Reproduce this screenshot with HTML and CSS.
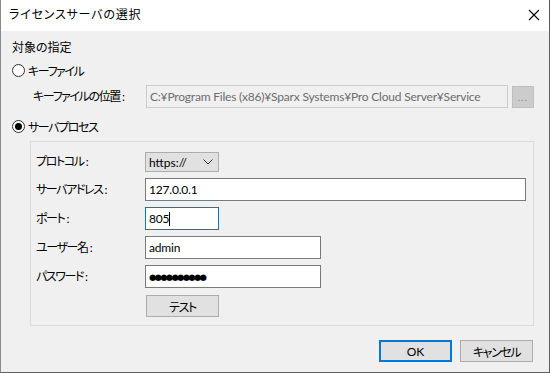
FILE: index.html
```html
<!DOCTYPE html>
<html lang="ja">
<head>
  <meta charset="UTF-8">
  <title>ライセンスサーバの選択</title>
  <link rel="stylesheet" href="styles.css">
</head>
<body>
  <div class="window">
    <div class="titlebar">
      <span class="title">ライセンスサーバの選択</span>
      <svg class="close" width="12" height="12" viewBox="0 0 12 12">
        <path d="M1 1 L11 11 M11 1 L1 11" stroke="#000" stroke-width="1.1" fill="none"/>
      </svg>
    </div>

    <div class="content">
      <div class="section-title">対象の指定</div>

      <div class="radio-row">
        <span class="radio"></span>
        <span class="kana">キーファイル</span>
      </div>

      <div class="keypath-row">
        <span class="keypath-label kana">キーファイルの位置<span class="colon">:</span></span>
        <div class="field disabled keypath-field">C:¥Program Files (x86)¥Sparx Systems¥Pro Cloud Server¥Service</div>
        <div class="browse-btn">...</div>
      </div>

      <div class="radio-row second">
        <span class="radio checked"></span>
        <span class="kana">サーバプロセス</span>
      </div>

      <div class="group">
        <div class="row row-protocol">
          <span class="label kana">プロトコル<span class="colon">:</span></span>
          <div class="select">
            <span>https://</span>
            <svg width="10" height="6" viewBox="0 0 10 6">
              <path d="M0.5 0.5 L5 5 L9.5 0.5" stroke="#333" stroke-width="1" fill="none"/>
            </svg>
          </div>
        </div>
        <div class="row">
          <span class="label kana">サーバアドレス<span class="colon">:</span></span>
          <div class="field address">127.0.0.1</div>
        </div>
        <div class="row">
          <span class="label kana">ポート<span class="colon">:</span></span>
          <div class="field short focused">805<span class="caret"></span></div>
        </div>
        <div class="row">
          <span class="label kana">ユーザー名<span class="colon">:</span></span>
          <div class="field medium">admin</div>
        </div>
        <div class="row">
          <span class="label kana">パスワード<span class="colon">:</span></span>
          <div class="field medium"><span class="dots">●●●●●●●●●●</span></div>
        </div>
        <div class="row row-test">
          <span class="label"></span>
          <div class="button test-btn kana">テスト</div>
        </div>
      </div>

      <div class="footer">
        <div class="button default">OK</div>
        <div class="button kana">キャンセル</div>
      </div>
    </div>
  </div>
</body>
</html>
```

FILE: styles.css
```css
body {
  margin: 0;
  font-family: Lato, "Noto Sans CJK JP", sans-serif;
  font-size: 12px;
  font-feature-settings: "palt";
  color: #000;
  background: #f0f0f0;
}

.window {
  width: 550px;
  height: 373px;
  box-sizing: border-box;
  border-left: 1px solid #8a8a8a;
  border-right: 1px solid #5f5f5f;
  border-bottom: 1px solid #5f5f5f;
  background: #f0f0f0;
}

.titlebar {
  height: 31px;
  background: #fff;
  display: flex;
  align-items: center;
  justify-content: space-between;
  padding: 0 9px 0 8px;
}

.title {
  line-height: 16px;
  padding-bottom: 2px;
  letter-spacing: 0.8px;
}

.close {
  margin-bottom: 1px;
}

.content {
  padding: 9px 15px 0 11px;
}

.kana {
  letter-spacing: -1.4px;
}

.colon {
  letter-spacing: 0;
  margin-left: 2px;
}

.section-title {
  height: 16px;
  line-height: 16px;
}

.radio-row {
  display: flex;
  align-items: center;
  height: 16px;
  margin-top: 6px;
}

.radio-row.second {
  margin-top: 10px;
}

.radio {
  width: 11px;
  height: 11px;
  border: 1px solid #333;
  border-radius: 50%;
  background: #fff;
  margin-right: 3px;
  position: relative;
}

.radio.checked::after {
  content: "";
  position: absolute;
  left: 2px;
  top: 2px;
  width: 7px;
  height: 7px;
  border-radius: 50%;
  background: #000;
}

.keypath-row {
  display: flex;
  align-items: center;
  margin-top: 7px;
  padding-left: 21px;
}

.keypath-label {
  width: 113px;
  padding-bottom: 2px;
}

.field {
  height: 23px;
  box-sizing: border-box;
  border: 1px solid #7a7a7a;
  background: #fff;
  padding: 0 3px;
  display: flex;
  align-items: center;
  white-space: nowrap;
  overflow: hidden;
  letter-spacing: -0.2px;
}

.field.disabled {
  background: #f0f0f0;
  border-color: #cccccc;
  color: #6d6d6d;
}

.keypath-field {
  width: 362px;
}

.browse-btn {
  width: 22px;
  height: 22px;
  box-sizing: border-box;
  margin-left: 4px;
  background: #cccccc;
  border: 1px solid #bfbfbf;
  color: #8a8a8a;
  font-size: 10px;
  display: flex;
  align-items: center;
  justify-content: center;
  letter-spacing: 1px;
}

.group {
  margin: 7px 0 0 18px;
  border: 1px solid #dcdcdc;
  padding: 10px 7px 8px 5px;
}

.row {
  display: flex;
  align-items: center;
  margin-top: 6px;
}

.row:first-child {
  margin-top: 0;
}

.row-test {
  margin-top: 7px;
}

.label {
  width: 109px;
  flex: none;
  padding-bottom: 3px;
}

.select {
  width: 74px;
  height: 20px;
  box-sizing: border-box;
  background: #e1e1e1;
  border: 1px solid #adadad;
  display: flex;
  align-items: center;
  justify-content: space-between;
  padding: 0 5px 0 3px;
}

.address {
  flex: 1;
}

.short {
  width: 74px;
}

.medium {
  width: 176px;
}

.focused {
  border-color: #0078d7;
}

.caret {
  display: inline-block;
  width: 1px;
  height: 14px;
  background: #000;
}

.dots {
  font-family: "DejaVu Sans", sans-serif;
  font-size: 8.5px;
  letter-spacing: -1.8px;
}

.button {
  width: 73px;
  height: 22px;
  box-sizing: border-box;
  background: #e1e1e1;
  border: 1px solid #adadad;
  display: flex;
  align-items: center;
  justify-content: center;
}

.test-btn {
  margin-left: 1px;
}

.footer {
  display: flex;
  justify-content: flex-end;
  gap: 8px;
  margin-top: 14px;
  margin-right: 1px;
}

.button.default {
  border: 2px solid #0078d7;
}
```
